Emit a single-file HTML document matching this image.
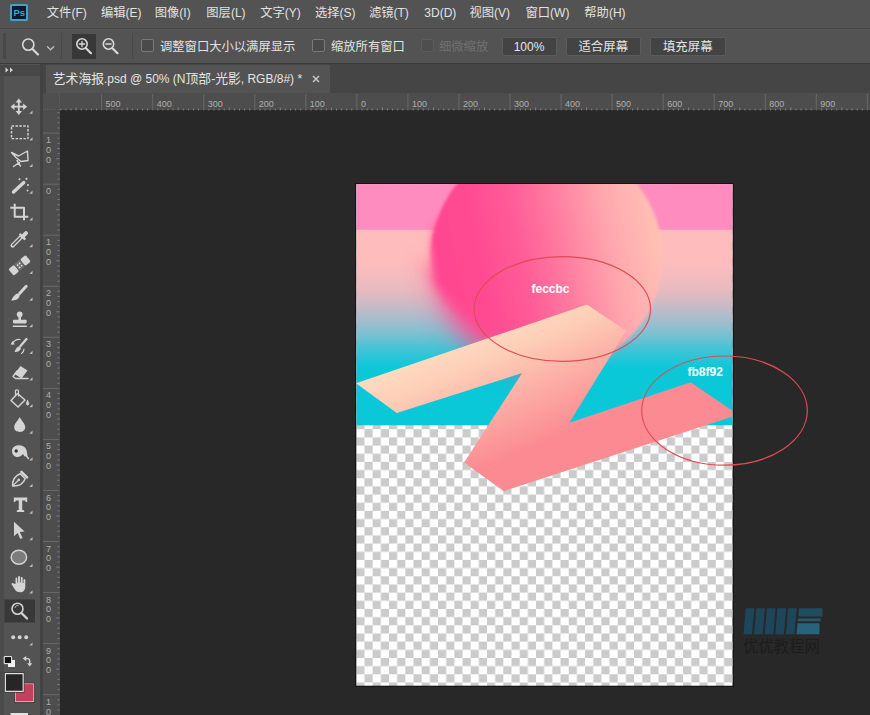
<!DOCTYPE html>
<html><head><meta charset="utf-8"><title>Photoshop</title><style>
*{box-sizing:border-box}
html,body{margin:0;padding:0}
body{width:870px;height:715px;overflow:hidden;background:#282828;position:relative;
 font-family:"Liberation Sans","Noto Sans CJK SC",sans-serif;font-size:12px;color:#dcdcdc}
.abs{position:absolute}
.t{position:absolute;white-space:nowrap;line-height:16px;height:16px}
#menubar{left:0;top:0;width:870px;height:29px;background:#535353;border-bottom:1.5px solid #464646}
#optbar{left:0;top:29px;width:870px;height:35px;background:#535353;border-top:1px solid #585858;border-bottom:1.5px solid #3a3a3a}
#tabstrip{left:39px;top:64px;width:831px;height:30px;background:#454545}
#tab{left:45.5px;top:64.5px;width:284px;height:29px;background:#535353}
#toolbar{left:0;top:64px;width:40px;height:651px;background:#535353}
#toolhead{left:0;top:64.5px;width:39.5px;height:11px;background:#474747}
#toolsep{left:39.5px;top:64px;width:3.5px;height:651px;background:#424242}
#hruler{left:42.5px;top:92.7px;width:828px;height:17.8px;background:#4d4d4d}
#vruler{left:42.5px;top:93px;width:17px;height:622px;background:#4d4d4d}
.btn{position:absolute;top:37px;height:19px;background:#434343;border:1px solid #5c5c5c;border-radius:2px;
 text-align:center;line-height:19px;color:#e6e6e6;white-space:nowrap}
.cb{position:absolute;top:39px;width:13px;height:13px;border:1px solid #7a7a7a;background:#4a4a4a;border-radius:2px}
.rl{position:absolute;font-size:9px;line-height:9px;color:#adadad;white-space:nowrap}
</style></head>
<body>
<div id="menubar" class="abs"></div>
<div class="abs" style="left:9.7px;top:3.6px;width:18px;height:17.6px;background:#0a1c2c;border:2px solid #3fa2c6;border-radius:1.5px"></div>
<div class="abs" style="left:13.6px;top:6.6px;font-size:9.5px;line-height:12px;font-weight:bold;color:#2eaad4;letter-spacing:-0.3px">Ps</div>
<div class="t" style="left:46.8px;top:5px;color:#e2e2e2"><span style="font-size:12.3px">文件</span>(F)</div>
<div class="t" style="left:101px;top:5px;color:#e2e2e2"><span style="font-size:12.3px">编辑</span>(E)</div>
<div class="t" style="left:154.7px;top:5px;color:#e2e2e2"><span style="font-size:12.3px">图像</span>(I)</div>
<div class="t" style="left:206.3px;top:5px;color:#e2e2e2"><span style="font-size:12.3px">图层</span>(L)</div>
<div class="t" style="left:260.2px;top:5px;color:#e2e2e2"><span style="font-size:12.3px">文字</span>(Y)</div>
<div class="t" style="left:315px;top:5px;color:#e2e2e2"><span style="font-size:12.3px">选择</span>(S)</div>
<div class="t" style="left:368.9px;top:5px;color:#e2e2e2"><span style="font-size:12.3px">滤镜</span>(T)</div>
<div class="t" style="left:424.3px;top:5px;color:#e2e2e2">3D(D)</div>
<div class="t" style="left:469.5px;top:5px;color:#e2e2e2"><span style="font-size:12.3px">视图</span>(V)</div>
<div class="t" style="left:525.5px;top:5px;color:#e2e2e2"><span style="font-size:12.3px">窗口</span>(W)</div>
<div class="t" style="left:584.3px;top:5px;color:#e2e2e2"><span style="font-size:12.3px">帮助</span>(H)</div>
<div id="optbar" class="abs"></div>
<div class="abs" style="left:2.5px;top:33px;width:3px;height:26px;background:#494949"></div>
<div class="abs" style="left:60.5px;top:33px;width:1px;height:26px;background:#484848"></div>
<div class="abs" style="left:131.5px;top:33px;width:1px;height:26px;background:#484848"></div>
<div class="abs" style="left:72px;top:33.5px;width:23.5px;height:25.5px;background:#383838"></div>
<svg class="abs" style="left:0;top:28px" width="140" height="36" viewBox="0 28 140 36" fill="none" stroke="#d8d8d8" stroke-width="1.6" stroke-linecap="round">
<circle cx="28.3" cy="44.6" r="5.6"/><path d="M32.5 49 L38 54.5" stroke-width="2.2"/>
<path d="M47.5 46.8 L50.6 49.8 L53.7 46.8" stroke-width="1.3" stroke="#bdbdbd"/>
<circle cx="82" cy="44" r="5.2"/><path d="M86 48.2 L91 53.2" stroke-width="2.2"/><path d="M79.3 44 H84.7 M82 41.3 V46.7" stroke-width="1.3"/>
<circle cx="108.5" cy="44" r="5.2"/><path d="M112.5 48.2 L117.5 53.2" stroke-width="2.2"/><path d="M105.8 44 H111.2" stroke-width="1.3"/>
</svg>
<div class="cb" style="left:141px"></div>
<div class="t" style="left:160px;top:38.5px;color:#e2e2e2"><span style="font-size:12.3px">调整窗口大小以满屏显示</span></div>
<div class="cb" style="left:311.5px"></div>
<div class="t" style="left:331px;top:38.5px;color:#e2e2e2"><span style="font-size:12.3px">缩放所有窗口</span></div>
<div class="cb" style="left:421px;border-color:#5c5c5c;background:#4e4e4e"></div>
<div class="t" style="left:439px;top:38.5px;color:#707070"><span style="font-size:12.3px">细微缩放</span></div>
<div class="btn" style="left:501.5px;width:55px">100%</div>
<div class="btn" style="left:565.5px;width:75.5px"><span style="font-size:12.4px">适合屏幕</span></div>
<div class="btn" style="left:649.5px;width:76.5px"><span style="font-size:12.4px">填充屏幕</span></div>
<div id="tabstrip" class="abs"></div>
<div id="tab" class="abs"></div>
<div class="t" style="left:52.8px;top:70px;font-size:12px;line-height:17px;height:17px;color:#e4e4e4"><span style="font-size:12.8px">艺术海报</span>.psd @ 50% (N<span style="font-size:12.8px">顶部</span>-<span style="font-size:12.8px">光影</span>, RGB/8#) *</div>
<svg class="abs" style="left:310.5px;top:73.5px" width="10" height="10" viewBox="0 0 10 10"><path d="M2 2 L8 8 M8 2 L2 8" stroke="#c8c8c8" stroke-width="1.5"/></svg>
<div id="hruler" class="abs"></div>
<div id="vruler" class="abs"></div>
<svg class="abs" style="left:0;top:0" width="870" height="715" viewBox="0 0 870 715" fill="none"><path d="M60.8 108.5 V110.5" stroke="#7c7c7c" stroke-width="1"/><path d="M65.9 108.5 V110.5" stroke="#7c7c7c" stroke-width="1"/><path d="M71.0 108.5 V110.5" stroke="#7c7c7c" stroke-width="1"/><path d="M76.1 107.3 V110.5" stroke="#7c7c7c" stroke-width="1"/><path d="M81.2 108.5 V110.5" stroke="#7c7c7c" stroke-width="1"/><path d="M86.3 108.5 V110.5" stroke="#7c7c7c" stroke-width="1"/><path d="M91.4 108.5 V110.5" stroke="#7c7c7c" stroke-width="1"/><path d="M96.5 108.5 V110.5" stroke="#7c7c7c" stroke-width="1"/><path d="M101.6 94 V110.5" stroke="#686868" stroke-width="1"/><path d="M106.8 108.5 V110.5" stroke="#7c7c7c" stroke-width="1"/><path d="M111.9 108.5 V110.5" stroke="#7c7c7c" stroke-width="1"/><path d="M117.0 108.5 V110.5" stroke="#7c7c7c" stroke-width="1"/><path d="M122.1 108.5 V110.5" stroke="#7c7c7c" stroke-width="1"/><path d="M127.2 107.3 V110.5" stroke="#7c7c7c" stroke-width="1"/><path d="M132.3 108.5 V110.5" stroke="#7c7c7c" stroke-width="1"/><path d="M137.4 108.5 V110.5" stroke="#7c7c7c" stroke-width="1"/><path d="M142.5 108.5 V110.5" stroke="#7c7c7c" stroke-width="1"/><path d="M147.6 108.5 V110.5" stroke="#7c7c7c" stroke-width="1"/><path d="M152.7 94 V110.5" stroke="#686868" stroke-width="1"/><path d="M157.8 108.5 V110.5" stroke="#7c7c7c" stroke-width="1"/><path d="M162.9 108.5 V110.5" stroke="#7c7c7c" stroke-width="1"/><path d="M168.0 108.5 V110.5" stroke="#7c7c7c" stroke-width="1"/><path d="M173.1 108.5 V110.5" stroke="#7c7c7c" stroke-width="1"/><path d="M178.2 107.3 V110.5" stroke="#7c7c7c" stroke-width="1"/><path d="M183.3 108.5 V110.5" stroke="#7c7c7c" stroke-width="1"/><path d="M188.4 108.5 V110.5" stroke="#7c7c7c" stroke-width="1"/><path d="M193.5 108.5 V110.5" stroke="#7c7c7c" stroke-width="1"/><path d="M198.6 108.5 V110.5" stroke="#7c7c7c" stroke-width="1"/><path d="M203.8 94 V110.5" stroke="#686868" stroke-width="1"/><path d="M208.9 108.5 V110.5" stroke="#7c7c7c" stroke-width="1"/><path d="M214.0 108.5 V110.5" stroke="#7c7c7c" stroke-width="1"/><path d="M219.1 108.5 V110.5" stroke="#7c7c7c" stroke-width="1"/><path d="M224.2 108.5 V110.5" stroke="#7c7c7c" stroke-width="1"/><path d="M229.3 107.3 V110.5" stroke="#7c7c7c" stroke-width="1"/><path d="M234.4 108.5 V110.5" stroke="#7c7c7c" stroke-width="1"/><path d="M239.5 108.5 V110.5" stroke="#7c7c7c" stroke-width="1"/><path d="M244.6 108.5 V110.5" stroke="#7c7c7c" stroke-width="1"/><path d="M249.7 108.5 V110.5" stroke="#7c7c7c" stroke-width="1"/><path d="M254.8 94 V110.5" stroke="#686868" stroke-width="1"/><path d="M259.9 108.5 V110.5" stroke="#7c7c7c" stroke-width="1"/><path d="M265.0 108.5 V110.5" stroke="#7c7c7c" stroke-width="1"/><path d="M270.1 108.5 V110.5" stroke="#7c7c7c" stroke-width="1"/><path d="M275.2 108.5 V110.5" stroke="#7c7c7c" stroke-width="1"/><path d="M280.3 107.3 V110.5" stroke="#7c7c7c" stroke-width="1"/><path d="M285.4 108.5 V110.5" stroke="#7c7c7c" stroke-width="1"/><path d="M290.5 108.5 V110.5" stroke="#7c7c7c" stroke-width="1"/><path d="M295.6 108.5 V110.5" stroke="#7c7c7c" stroke-width="1"/><path d="M300.7 108.5 V110.5" stroke="#7c7c7c" stroke-width="1"/><path d="M305.8 94 V110.5" stroke="#686868" stroke-width="1"/><path d="M311.0 108.5 V110.5" stroke="#7c7c7c" stroke-width="1"/><path d="M316.1 108.5 V110.5" stroke="#7c7c7c" stroke-width="1"/><path d="M321.2 108.5 V110.5" stroke="#7c7c7c" stroke-width="1"/><path d="M326.3 108.5 V110.5" stroke="#7c7c7c" stroke-width="1"/><path d="M331.4 107.3 V110.5" stroke="#7c7c7c" stroke-width="1"/><path d="M336.5 108.5 V110.5" stroke="#7c7c7c" stroke-width="1"/><path d="M341.6 108.5 V110.5" stroke="#7c7c7c" stroke-width="1"/><path d="M346.7 108.5 V110.5" stroke="#7c7c7c" stroke-width="1"/><path d="M351.8 108.5 V110.5" stroke="#7c7c7c" stroke-width="1"/><path d="M356.9 94 V110.5" stroke="#686868" stroke-width="1"/><path d="M362.0 108.5 V110.5" stroke="#7c7c7c" stroke-width="1"/><path d="M367.1 108.5 V110.5" stroke="#7c7c7c" stroke-width="1"/><path d="M372.2 108.5 V110.5" stroke="#7c7c7c" stroke-width="1"/><path d="M377.3 108.5 V110.5" stroke="#7c7c7c" stroke-width="1"/><path d="M382.4 107.3 V110.5" stroke="#7c7c7c" stroke-width="1"/><path d="M387.5 108.5 V110.5" stroke="#7c7c7c" stroke-width="1"/><path d="M392.6 108.5 V110.5" stroke="#7c7c7c" stroke-width="1"/><path d="M397.7 108.5 V110.5" stroke="#7c7c7c" stroke-width="1"/><path d="M402.8 108.5 V110.5" stroke="#7c7c7c" stroke-width="1"/><path d="M407.9 94 V110.5" stroke="#686868" stroke-width="1"/><path d="M413.1 108.5 V110.5" stroke="#7c7c7c" stroke-width="1"/><path d="M418.2 108.5 V110.5" stroke="#7c7c7c" stroke-width="1"/><path d="M423.3 108.5 V110.5" stroke="#7c7c7c" stroke-width="1"/><path d="M428.4 108.5 V110.5" stroke="#7c7c7c" stroke-width="1"/><path d="M433.5 107.3 V110.5" stroke="#7c7c7c" stroke-width="1"/><path d="M438.6 108.5 V110.5" stroke="#7c7c7c" stroke-width="1"/><path d="M443.7 108.5 V110.5" stroke="#7c7c7c" stroke-width="1"/><path d="M448.8 108.5 V110.5" stroke="#7c7c7c" stroke-width="1"/><path d="M453.9 108.5 V110.5" stroke="#7c7c7c" stroke-width="1"/><path d="M459.0 94 V110.5" stroke="#686868" stroke-width="1"/><path d="M464.1 108.5 V110.5" stroke="#7c7c7c" stroke-width="1"/><path d="M469.2 108.5 V110.5" stroke="#7c7c7c" stroke-width="1"/><path d="M474.3 108.5 V110.5" stroke="#7c7c7c" stroke-width="1"/><path d="M479.4 108.5 V110.5" stroke="#7c7c7c" stroke-width="1"/><path d="M484.5 107.3 V110.5" stroke="#7c7c7c" stroke-width="1"/><path d="M489.6 108.5 V110.5" stroke="#7c7c7c" stroke-width="1"/><path d="M494.7 108.5 V110.5" stroke="#7c7c7c" stroke-width="1"/><path d="M499.8 108.5 V110.5" stroke="#7c7c7c" stroke-width="1"/><path d="M504.9 108.5 V110.5" stroke="#7c7c7c" stroke-width="1"/><path d="M510.0 94 V110.5" stroke="#686868" stroke-width="1"/><path d="M515.2 108.5 V110.5" stroke="#7c7c7c" stroke-width="1"/><path d="M520.3 108.5 V110.5" stroke="#7c7c7c" stroke-width="1"/><path d="M525.4 108.5 V110.5" stroke="#7c7c7c" stroke-width="1"/><path d="M530.5 108.5 V110.5" stroke="#7c7c7c" stroke-width="1"/><path d="M535.6 107.3 V110.5" stroke="#7c7c7c" stroke-width="1"/><path d="M540.7 108.5 V110.5" stroke="#7c7c7c" stroke-width="1"/><path d="M545.8 108.5 V110.5" stroke="#7c7c7c" stroke-width="1"/><path d="M550.9 108.5 V110.5" stroke="#7c7c7c" stroke-width="1"/><path d="M556.0 108.5 V110.5" stroke="#7c7c7c" stroke-width="1"/><path d="M561.1 94 V110.5" stroke="#686868" stroke-width="1"/><path d="M566.2 108.5 V110.5" stroke="#7c7c7c" stroke-width="1"/><path d="M571.3 108.5 V110.5" stroke="#7c7c7c" stroke-width="1"/><path d="M576.4 108.5 V110.5" stroke="#7c7c7c" stroke-width="1"/><path d="M581.5 108.5 V110.5" stroke="#7c7c7c" stroke-width="1"/><path d="M586.6 107.3 V110.5" stroke="#7c7c7c" stroke-width="1"/><path d="M591.7 108.5 V110.5" stroke="#7c7c7c" stroke-width="1"/><path d="M596.8 108.5 V110.5" stroke="#7c7c7c" stroke-width="1"/><path d="M601.9 108.5 V110.5" stroke="#7c7c7c" stroke-width="1"/><path d="M607.0 108.5 V110.5" stroke="#7c7c7c" stroke-width="1"/><path d="M612.1 94 V110.5" stroke="#686868" stroke-width="1"/><path d="M617.3 108.5 V110.5" stroke="#7c7c7c" stroke-width="1"/><path d="M622.4 108.5 V110.5" stroke="#7c7c7c" stroke-width="1"/><path d="M627.5 108.5 V110.5" stroke="#7c7c7c" stroke-width="1"/><path d="M632.6 108.5 V110.5" stroke="#7c7c7c" stroke-width="1"/><path d="M637.7 107.3 V110.5" stroke="#7c7c7c" stroke-width="1"/><path d="M642.8 108.5 V110.5" stroke="#7c7c7c" stroke-width="1"/><path d="M647.9 108.5 V110.5" stroke="#7c7c7c" stroke-width="1"/><path d="M653.0 108.5 V110.5" stroke="#7c7c7c" stroke-width="1"/><path d="M658.1 108.5 V110.5" stroke="#7c7c7c" stroke-width="1"/><path d="M663.2 94 V110.5" stroke="#686868" stroke-width="1"/><path d="M668.3 108.5 V110.5" stroke="#7c7c7c" stroke-width="1"/><path d="M673.4 108.5 V110.5" stroke="#7c7c7c" stroke-width="1"/><path d="M678.5 108.5 V110.5" stroke="#7c7c7c" stroke-width="1"/><path d="M683.6 108.5 V110.5" stroke="#7c7c7c" stroke-width="1"/><path d="M688.7 107.3 V110.5" stroke="#7c7c7c" stroke-width="1"/><path d="M693.8 108.5 V110.5" stroke="#7c7c7c" stroke-width="1"/><path d="M698.9 108.5 V110.5" stroke="#7c7c7c" stroke-width="1"/><path d="M704.0 108.5 V110.5" stroke="#7c7c7c" stroke-width="1"/><path d="M709.1 108.5 V110.5" stroke="#7c7c7c" stroke-width="1"/><path d="M714.2 94 V110.5" stroke="#686868" stroke-width="1"/><path d="M719.4 108.5 V110.5" stroke="#7c7c7c" stroke-width="1"/><path d="M724.5 108.5 V110.5" stroke="#7c7c7c" stroke-width="1"/><path d="M729.6 108.5 V110.5" stroke="#7c7c7c" stroke-width="1"/><path d="M734.7 108.5 V110.5" stroke="#7c7c7c" stroke-width="1"/><path d="M739.8 107.3 V110.5" stroke="#7c7c7c" stroke-width="1"/><path d="M744.9 108.5 V110.5" stroke="#7c7c7c" stroke-width="1"/><path d="M750.0 108.5 V110.5" stroke="#7c7c7c" stroke-width="1"/><path d="M755.1 108.5 V110.5" stroke="#7c7c7c" stroke-width="1"/><path d="M760.2 108.5 V110.5" stroke="#7c7c7c" stroke-width="1"/><path d="M765.3 94 V110.5" stroke="#686868" stroke-width="1"/><path d="M770.4 108.5 V110.5" stroke="#7c7c7c" stroke-width="1"/><path d="M775.5 108.5 V110.5" stroke="#7c7c7c" stroke-width="1"/><path d="M780.6 108.5 V110.5" stroke="#7c7c7c" stroke-width="1"/><path d="M785.7 108.5 V110.5" stroke="#7c7c7c" stroke-width="1"/><path d="M790.8 107.3 V110.5" stroke="#7c7c7c" stroke-width="1"/><path d="M795.9 108.5 V110.5" stroke="#7c7c7c" stroke-width="1"/><path d="M801.0 108.5 V110.5" stroke="#7c7c7c" stroke-width="1"/><path d="M806.1 108.5 V110.5" stroke="#7c7c7c" stroke-width="1"/><path d="M811.2 108.5 V110.5" stroke="#7c7c7c" stroke-width="1"/><path d="M816.3 94 V110.5" stroke="#686868" stroke-width="1"/><path d="M821.5 108.5 V110.5" stroke="#7c7c7c" stroke-width="1"/><path d="M826.6 108.5 V110.5" stroke="#7c7c7c" stroke-width="1"/><path d="M831.7 108.5 V110.5" stroke="#7c7c7c" stroke-width="1"/><path d="M836.8 108.5 V110.5" stroke="#7c7c7c" stroke-width="1"/><path d="M841.9 107.3 V110.5" stroke="#7c7c7c" stroke-width="1"/><path d="M847.0 108.5 V110.5" stroke="#7c7c7c" stroke-width="1"/><path d="M852.1 108.5 V110.5" stroke="#7c7c7c" stroke-width="1"/><path d="M857.2 108.5 V110.5" stroke="#7c7c7c" stroke-width="1"/><path d="M862.3 108.5 V110.5" stroke="#7c7c7c" stroke-width="1"/><path d="M867.4 94 V110.5" stroke="#686868" stroke-width="1"/><path d="M57.5 112.7 H59.5" stroke="#7c7c7c" stroke-width="1"/><path d="M57.5 117.8 H59.5" stroke="#7c7c7c" stroke-width="1"/><path d="M57.5 122.9 H59.5" stroke="#7c7c7c" stroke-width="1"/><path d="M57.5 128.0 H59.5" stroke="#7c7c7c" stroke-width="1"/><path d="M43 133.1 H59.5" stroke="#686868" stroke-width="1"/><path d="M57.5 138.3 H59.5" stroke="#7c7c7c" stroke-width="1"/><path d="M57.5 143.4 H59.5" stroke="#7c7c7c" stroke-width="1"/><path d="M57.5 148.5 H59.5" stroke="#7c7c7c" stroke-width="1"/><path d="M57.5 153.6 H59.5" stroke="#7c7c7c" stroke-width="1"/><path d="M56.3 158.7 H59.5" stroke="#7c7c7c" stroke-width="1"/><path d="M57.5 163.8 H59.5" stroke="#7c7c7c" stroke-width="1"/><path d="M57.5 168.9 H59.5" stroke="#7c7c7c" stroke-width="1"/><path d="M57.5 174.0 H59.5" stroke="#7c7c7c" stroke-width="1"/><path d="M57.5 179.1 H59.5" stroke="#7c7c7c" stroke-width="1"/><path d="M43 184.2 H59.5" stroke="#686868" stroke-width="1"/><path d="M57.5 189.3 H59.5" stroke="#7c7c7c" stroke-width="1"/><path d="M57.5 194.4 H59.5" stroke="#7c7c7c" stroke-width="1"/><path d="M57.5 199.5 H59.5" stroke="#7c7c7c" stroke-width="1"/><path d="M57.5 204.6 H59.5" stroke="#7c7c7c" stroke-width="1"/><path d="M56.3 209.7 H59.5" stroke="#7c7c7c" stroke-width="1"/><path d="M57.5 214.8 H59.5" stroke="#7c7c7c" stroke-width="1"/><path d="M57.5 219.9 H59.5" stroke="#7c7c7c" stroke-width="1"/><path d="M57.5 225.0 H59.5" stroke="#7c7c7c" stroke-width="1"/><path d="M57.5 230.1 H59.5" stroke="#7c7c7c" stroke-width="1"/><path d="M43 235.2 H59.5" stroke="#686868" stroke-width="1"/><path d="M57.5 240.4 H59.5" stroke="#7c7c7c" stroke-width="1"/><path d="M57.5 245.5 H59.5" stroke="#7c7c7c" stroke-width="1"/><path d="M57.5 250.6 H59.5" stroke="#7c7c7c" stroke-width="1"/><path d="M57.5 255.7 H59.5" stroke="#7c7c7c" stroke-width="1"/><path d="M56.3 260.8 H59.5" stroke="#7c7c7c" stroke-width="1"/><path d="M57.5 265.9 H59.5" stroke="#7c7c7c" stroke-width="1"/><path d="M57.5 271.0 H59.5" stroke="#7c7c7c" stroke-width="1"/><path d="M57.5 276.1 H59.5" stroke="#7c7c7c" stroke-width="1"/><path d="M57.5 281.2 H59.5" stroke="#7c7c7c" stroke-width="1"/><path d="M43 286.3 H59.5" stroke="#686868" stroke-width="1"/><path d="M57.5 291.4 H59.5" stroke="#7c7c7c" stroke-width="1"/><path d="M57.5 296.5 H59.5" stroke="#7c7c7c" stroke-width="1"/><path d="M57.5 301.6 H59.5" stroke="#7c7c7c" stroke-width="1"/><path d="M57.5 306.7 H59.5" stroke="#7c7c7c" stroke-width="1"/><path d="M56.3 311.8 H59.5" stroke="#7c7c7c" stroke-width="1"/><path d="M57.5 316.9 H59.5" stroke="#7c7c7c" stroke-width="1"/><path d="M57.5 322.0 H59.5" stroke="#7c7c7c" stroke-width="1"/><path d="M57.5 327.1 H59.5" stroke="#7c7c7c" stroke-width="1"/><path d="M57.5 332.2 H59.5" stroke="#7c7c7c" stroke-width="1"/><path d="M43 337.3 H59.5" stroke="#686868" stroke-width="1"/><path d="M57.5 342.5 H59.5" stroke="#7c7c7c" stroke-width="1"/><path d="M57.5 347.6 H59.5" stroke="#7c7c7c" stroke-width="1"/><path d="M57.5 352.7 H59.5" stroke="#7c7c7c" stroke-width="1"/><path d="M57.5 357.8 H59.5" stroke="#7c7c7c" stroke-width="1"/><path d="M56.3 362.9 H59.5" stroke="#7c7c7c" stroke-width="1"/><path d="M57.5 368.0 H59.5" stroke="#7c7c7c" stroke-width="1"/><path d="M57.5 373.1 H59.5" stroke="#7c7c7c" stroke-width="1"/><path d="M57.5 378.2 H59.5" stroke="#7c7c7c" stroke-width="1"/><path d="M57.5 383.3 H59.5" stroke="#7c7c7c" stroke-width="1"/><path d="M43 388.4 H59.5" stroke="#686868" stroke-width="1"/><path d="M57.5 393.5 H59.5" stroke="#7c7c7c" stroke-width="1"/><path d="M57.5 398.6 H59.5" stroke="#7c7c7c" stroke-width="1"/><path d="M57.5 403.7 H59.5" stroke="#7c7c7c" stroke-width="1"/><path d="M57.5 408.8 H59.5" stroke="#7c7c7c" stroke-width="1"/><path d="M56.3 413.9 H59.5" stroke="#7c7c7c" stroke-width="1"/><path d="M57.5 419.0 H59.5" stroke="#7c7c7c" stroke-width="1"/><path d="M57.5 424.1 H59.5" stroke="#7c7c7c" stroke-width="1"/><path d="M57.5 429.2 H59.5" stroke="#7c7c7c" stroke-width="1"/><path d="M57.5 434.3 H59.5" stroke="#7c7c7c" stroke-width="1"/><path d="M43 439.4 H59.5" stroke="#686868" stroke-width="1"/><path d="M57.5 444.6 H59.5" stroke="#7c7c7c" stroke-width="1"/><path d="M57.5 449.7 H59.5" stroke="#7c7c7c" stroke-width="1"/><path d="M57.5 454.8 H59.5" stroke="#7c7c7c" stroke-width="1"/><path d="M57.5 459.9 H59.5" stroke="#7c7c7c" stroke-width="1"/><path d="M56.3 465.0 H59.5" stroke="#7c7c7c" stroke-width="1"/><path d="M57.5 470.1 H59.5" stroke="#7c7c7c" stroke-width="1"/><path d="M57.5 475.2 H59.5" stroke="#7c7c7c" stroke-width="1"/><path d="M57.5 480.3 H59.5" stroke="#7c7c7c" stroke-width="1"/><path d="M57.5 485.4 H59.5" stroke="#7c7c7c" stroke-width="1"/><path d="M43 490.5 H59.5" stroke="#686868" stroke-width="1"/><path d="M57.5 495.6 H59.5" stroke="#7c7c7c" stroke-width="1"/><path d="M57.5 500.7 H59.5" stroke="#7c7c7c" stroke-width="1"/><path d="M57.5 505.8 H59.5" stroke="#7c7c7c" stroke-width="1"/><path d="M57.5 510.9 H59.5" stroke="#7c7c7c" stroke-width="1"/><path d="M56.3 516.0 H59.5" stroke="#7c7c7c" stroke-width="1"/><path d="M57.5 521.1 H59.5" stroke="#7c7c7c" stroke-width="1"/><path d="M57.5 526.2 H59.5" stroke="#7c7c7c" stroke-width="1"/><path d="M57.5 531.3 H59.5" stroke="#7c7c7c" stroke-width="1"/><path d="M57.5 536.4 H59.5" stroke="#7c7c7c" stroke-width="1"/><path d="M43 541.5 H59.5" stroke="#686868" stroke-width="1"/><path d="M57.5 546.7 H59.5" stroke="#7c7c7c" stroke-width="1"/><path d="M57.5 551.8 H59.5" stroke="#7c7c7c" stroke-width="1"/><path d="M57.5 556.9 H59.5" stroke="#7c7c7c" stroke-width="1"/><path d="M57.5 562.0 H59.5" stroke="#7c7c7c" stroke-width="1"/><path d="M56.3 567.1 H59.5" stroke="#7c7c7c" stroke-width="1"/><path d="M57.5 572.2 H59.5" stroke="#7c7c7c" stroke-width="1"/><path d="M57.5 577.3 H59.5" stroke="#7c7c7c" stroke-width="1"/><path d="M57.5 582.4 H59.5" stroke="#7c7c7c" stroke-width="1"/><path d="M57.5 587.5 H59.5" stroke="#7c7c7c" stroke-width="1"/><path d="M43 592.6 H59.5" stroke="#686868" stroke-width="1"/><path d="M57.5 597.7 H59.5" stroke="#7c7c7c" stroke-width="1"/><path d="M57.5 602.8 H59.5" stroke="#7c7c7c" stroke-width="1"/><path d="M57.5 607.9 H59.5" stroke="#7c7c7c" stroke-width="1"/><path d="M57.5 613.0 H59.5" stroke="#7c7c7c" stroke-width="1"/><path d="M56.3 618.1 H59.5" stroke="#7c7c7c" stroke-width="1"/><path d="M57.5 623.2 H59.5" stroke="#7c7c7c" stroke-width="1"/><path d="M57.5 628.3 H59.5" stroke="#7c7c7c" stroke-width="1"/><path d="M57.5 633.4 H59.5" stroke="#7c7c7c" stroke-width="1"/><path d="M57.5 638.5 H59.5" stroke="#7c7c7c" stroke-width="1"/><path d="M43 643.6 H59.5" stroke="#686868" stroke-width="1"/><path d="M57.5 648.8 H59.5" stroke="#7c7c7c" stroke-width="1"/><path d="M57.5 653.9 H59.5" stroke="#7c7c7c" stroke-width="1"/><path d="M57.5 659.0 H59.5" stroke="#7c7c7c" stroke-width="1"/><path d="M57.5 664.1 H59.5" stroke="#7c7c7c" stroke-width="1"/><path d="M56.3 669.2 H59.5" stroke="#7c7c7c" stroke-width="1"/><path d="M57.5 674.3 H59.5" stroke="#7c7c7c" stroke-width="1"/><path d="M57.5 679.4 H59.5" stroke="#7c7c7c" stroke-width="1"/><path d="M57.5 684.5 H59.5" stroke="#7c7c7c" stroke-width="1"/><path d="M57.5 689.6 H59.5" stroke="#7c7c7c" stroke-width="1"/><path d="M43 694.7 H59.5" stroke="#686868" stroke-width="1"/><path d="M57.5 699.8 H59.5" stroke="#7c7c7c" stroke-width="1"/><path d="M57.5 704.9 H59.5" stroke="#7c7c7c" stroke-width="1"/><path d="M57.5 710.0 H59.5" stroke="#7c7c7c" stroke-width="1"/></svg>
<div class="rl" style="left:105.6px;top:99.5px">500</div>
<div class="rl" style="left:156.7px;top:99.5px">400</div>
<div class="rl" style="left:207.8px;top:99.5px">300</div>
<div class="rl" style="left:258.8px;top:99.5px">200</div>
<div class="rl" style="left:309.8px;top:99.5px">100</div>
<div class="rl" style="left:360.9px;top:99.5px">0</div>
<div class="rl" style="left:411.9px;top:99.5px">100</div>
<div class="rl" style="left:463.0px;top:99.5px">200</div>
<div class="rl" style="left:514.0px;top:99.5px">300</div>
<div class="rl" style="left:565.1px;top:99.5px">400</div>
<div class="rl" style="left:616.1px;top:99.5px">500</div>
<div class="rl" style="left:667.2px;top:99.5px">600</div>
<div class="rl" style="left:718.2px;top:99.5px">700</div>
<div class="rl" style="left:769.3px;top:99.5px">800</div>
<div class="rl" style="left:820.3px;top:99.5px">900</div>
<div class="rl" style="left:871.4px;top:99.5px">1000</div>
<div class="rl" style="left:46px;top:136.1px">1</div>
<div class="rl" style="left:46px;top:145.9px">0</div>
<div class="rl" style="left:46px;top:155.7px">0</div>
<div class="rl" style="left:46px;top:187.2px">0</div>
<div class="rl" style="left:46px;top:238.2px">1</div>
<div class="rl" style="left:46px;top:248.1px">0</div>
<div class="rl" style="left:46px;top:257.9px">0</div>
<div class="rl" style="left:46px;top:289.3px">2</div>
<div class="rl" style="left:46px;top:299.1px">0</div>
<div class="rl" style="left:46px;top:308.9px">0</div>
<div class="rl" style="left:46px;top:340.3px">3</div>
<div class="rl" style="left:46px;top:350.1px">0</div>
<div class="rl" style="left:46px;top:359.9px">0</div>
<div class="rl" style="left:46px;top:391.4px">4</div>
<div class="rl" style="left:46px;top:401.2px">0</div>
<div class="rl" style="left:46px;top:411.0px">0</div>
<div class="rl" style="left:46px;top:442.4px">5</div>
<div class="rl" style="left:46px;top:452.2px">0</div>
<div class="rl" style="left:46px;top:462.1px">0</div>
<div class="rl" style="left:46px;top:493.5px">6</div>
<div class="rl" style="left:46px;top:503.3px">0</div>
<div class="rl" style="left:46px;top:513.1px">0</div>
<div class="rl" style="left:46px;top:544.5px">7</div>
<div class="rl" style="left:46px;top:554.3px">0</div>
<div class="rl" style="left:46px;top:564.1px">0</div>
<div class="rl" style="left:46px;top:595.6px">8</div>
<div class="rl" style="left:46px;top:605.4px">0</div>
<div class="rl" style="left:46px;top:615.2px">0</div>
<div class="rl" style="left:46px;top:646.6px">9</div>
<div class="rl" style="left:46px;top:656.4px">0</div>
<div class="rl" style="left:46px;top:666.2px">0</div>
<div class="rl" style="left:46px;top:697.7px">1</div>
<div class="rl" style="left:46px;top:707.5px">0</div>
<div class="rl" style="left:46px;top:717.3px">0</div>
<div class="rl" style="left:46px;top:727.1px">0</div>
<div class="abs" style="left:42.5px;top:92.7px;width:17px;height:17.8px;background:#4f4f4f;border-right:1px dotted #5e5e5e;border-bottom:1px dotted #5e5e5e"></div>
<svg class="abs" style="left:0;top:0" width="870" height="715" viewBox="0 0 870 715">
<defs>
<pattern id="chk" x="356.3" y="184.1" width="16.34" height="16.34" patternUnits="userSpaceOnUse">
<rect width="16.34" height="16.34" fill="#ffffff"/><rect x="8.17" width="8.17" height="8.17" fill="#cbcbcb"/><rect y="8.17" width="8.17" height="8.17" fill="#cbcbcb"/></pattern>
<clipPath id="dc"><rect x="356.3" y="184.1" width="376.3" height="501.6"/></clipPath>
<linearGradient id="bg" x1="0" y1="230" x2="0" y2="425.5" gradientUnits="userSpaceOnUse">
<stop offset="0" stop-color="#ffbcbc"/><stop offset="0.164" stop-color="#ffbcbc"/><stop offset="0.307" stop-color="#e8bac0"/><stop offset="0.409" stop-color="#c0bac8"/><stop offset="0.512" stop-color="#88c0d0"/><stop offset="0.614" stop-color="#40c4d6"/><stop offset="0.706" stop-color="#0ac8d8"/><stop offset="1" stop-color="#0ac8d8"/></linearGradient>
<linearGradient id="sp" x1="433" y1="280" x2="658" y2="236" gradientUnits="userSpaceOnUse">
<stop offset="0" stop-color="#ff4590"/><stop offset="0.2" stop-color="#ff4991"/><stop offset="0.4" stop-color="#ff5c97"/><stop offset="0.58" stop-color="#ff7ca0"/><stop offset="0.8" stop-color="#ffa8ae"/><stop offset="1" stop-color="#ffc0b4"/></linearGradient>
<linearGradient id="ng" x1="560" y1="300" x2="609.1" y2="414.9" gradientUnits="userSpaceOnUse">
<stop offset="0" stop-color="#fedac0"/><stop offset="0.22" stop-color="#fdceb6"/><stop offset="0.55" stop-color="#fcb0a6"/><stop offset="1" stop-color="#fb8a92"/></linearGradient>
<filter id="b1" x="-20%" y="-20%" width="140%" height="140%"><feGaussianBlur stdDeviation="1.8"/></filter>
<filter id="b2" x="-30%" y="-30%" width="160%" height="160%"><feGaussianBlur stdDeviation="13"/></filter>
<linearGradient id="mgB" x1="546.8" y1="256.8" x2="474.8" y2="352.8" gradientUnits="userSpaceOnUse"><stop offset="0.433" stop-color="#fff"/><stop offset="0.667" stop-color="#000"/></linearGradient>
<linearGradient id="mgM" x1="546.8" y1="256.8" x2="474.8" y2="352.8" gradientUnits="userSpaceOnUse"><stop offset="0.233" stop-color="#000"/><stop offset="0.417" stop-color="#fff"/><stop offset="0.70" stop-color="#fff"/><stop offset="0.85" stop-color="#000"/></linearGradient>
<linearGradient id="mgA" x1="546.8" y1="256.8" x2="474.8" y2="352.8" gradientUnits="userSpaceOnUse"><stop offset="0.583" stop-color="#000"/><stop offset="0.733" stop-color="#fff"/></linearGradient>
<mask id="mkB" maskUnits="userSpaceOnUse" x="300" y="100" width="500" height="400"><rect x="300" y="100" width="500" height="400" fill="url(#mgB)"/></mask>
<mask id="mkM" maskUnits="userSpaceOnUse" x="300" y="100" width="500" height="400"><rect x="300" y="100" width="500" height="400" fill="url(#mgM)"/></mask>
<mask id="mkA" maskUnits="userSpaceOnUse" x="300" y="100" width="500" height="400"><rect x="300" y="100" width="500" height="400" fill="url(#mgA)"/></mask>
<filter id="b3" x="-20%" y="-20%" width="140%" height="140%"><feGaussianBlur stdDeviation="4.5"/></filter>
</defs>
<rect x="355.1" y="183.1" width="378.7" height="503.8" fill="#131313"/>
<rect x="356.3" y="184.1" width="376.3" height="501.6" fill="url(#chk)"/>
<g clip-path="url(#dc)">
<rect x="356.3" y="184.1" width="376.3" height="45.900000000000006" fill="#ff8cbf"/>
<rect x="356.3" y="229.8" width="376.3" height="195.5" fill="url(#bg)"/>
<g mask="url(#mkA)"><circle cx="546.8" cy="256.8" r="114.5" fill="url(#sp)" filter="url(#b2)"/></g>
<g mask="url(#mkM)"><circle cx="546.8" cy="256.8" r="115.5" fill="url(#sp)" filter="url(#b3)"/></g>
<g mask="url(#mkB)"><circle cx="546.8" cy="256.8" r="115.8" fill="url(#sp)" filter="url(#b1)"/></g>
<polygon points="356,383.2 587,304.5 626,330.8 569.3,422.8 690.8,382.2 732.7,411 732.7,416.5 503.8,491.2 464,462.6 522.2,373 396.8,413" fill="url(#ng)"/>
</g>
<ellipse cx="562.3" cy="309" rx="88.3" ry="52.4" fill="none" stroke="#e04c52" stroke-width="1.2"/>
<ellipse cx="724.5" cy="410.6" rx="82.8" ry="54.6" fill="none" stroke="#e04c52" stroke-width="1.2"/>
</svg>
<div class="t" style="left:531.5px;top:281px;font-size:12px;font-weight:bold;color:#fff">feccbc</div>
<div class="t" style="left:687.5px;top:364px;font-size:12px;font-weight:bold;color:#fff">fb8f92</div>
<svg class="abs" style="left:738px;top:604px" width="92" height="54" viewBox="738 604 92 54"><path d="M745.7 608.3 H754.3 L752.1 634.3 H743.5Z" fill="#1e465a"/><path d="M756.3 608.3 H764.9 L762.7 634.3 H754.1Z" fill="#1e465a"/><path d="M766.9 608.3 H775.5 L773.3 634.3 H764.7Z" fill="#1e465a"/><path d="M777.5 608.3 H786.1 L783.9 634.3 H775.3Z" fill="#1e465a"/><path d="M788.1 608.3 H796.7 L794.5 634.3 H785.9Z" fill="#1e465a"/><path d="M799 608.3 H822.5 V616.5 H798.3Z" fill="#204c62"/><path d="M798 618.5 H820.5 V621.3 H797.8Z" fill="#275a70"/><path d="M797.5 623.3 H819.5 V634.3 H796.5Z" fill="#26647c"/></svg>
<div class="t" style="left:743px;top:637.5px;color:#1c1c1c;line-height:18px;height:18px"><span style="font-size:15.4px">优优教程网</span></div>
<div id="toolbar" class="abs"></div>
<div id="toolhead" class="abs"></div>
<div class="abs" style="left:0;top:75.5px;width:3.5px;height:640px;background:#4b4b4b"></div>
<div id="toolsep" class="abs"></div>
<svg class="abs" style="left:0;top:64px" width="42" height="651" viewBox="0 64 42 651" fill="none" stroke="#d4d4d4" stroke-linecap="round" stroke-linejoin="round"><path d="M5.5 67.6 L8.5 70 L5.5 72.4Z M10 67.6 L13 70 L10 72.4Z" fill="#d4d4d4" stroke="none"/><path d="M32.5 110.6 V113.8 H29.3Z" fill="#bcbcbc" stroke="none"/><path d="M32.5 137.3 V140.5 H29.3Z" fill="#bcbcbc" stroke="none"/><path d="M32.5 163.8 V167 H29.3Z" fill="#bcbcbc" stroke="none"/><path d="M32.5 190.60000000000002 V193.8 H29.3Z" fill="#bcbcbc" stroke="none"/><path d="M32.5 217.3 V220.5 H29.3Z" fill="#bcbcbc" stroke="none"/><path d="M32.5 244.10000000000002 V247.3 H29.3Z" fill="#bcbcbc" stroke="none"/><path d="M32.5 270.8 V274 H29.3Z" fill="#bcbcbc" stroke="none"/><path d="M32.5 297.6 V300.8 H29.3Z" fill="#bcbcbc" stroke="none"/><path d="M32.5 324.1 V327.3 H29.3Z" fill="#bcbcbc" stroke="none"/><path d="M32.5 350.8 V354 H29.3Z" fill="#bcbcbc" stroke="none"/><path d="M32.5 377.3 V380.5 H29.3Z" fill="#bcbcbc" stroke="none"/><path d="M32.5 404.1 V407.3 H29.3Z" fill="#bcbcbc" stroke="none"/><path d="M32.5 430.6 V433.8 H29.3Z" fill="#bcbcbc" stroke="none"/><path d="M32.5 457.3 V460.5 H29.3Z" fill="#bcbcbc" stroke="none"/><path d="M32.5 483.8 V487 H29.3Z" fill="#bcbcbc" stroke="none"/><path d="M32.5 510.59999999999997 V513.8 H29.3Z" fill="#bcbcbc" stroke="none"/><path d="M32.5 537.0999999999999 V540.3 H29.3Z" fill="#bcbcbc" stroke="none"/><path d="M32.5 563.8 V567 H29.3Z" fill="#bcbcbc" stroke="none"/><path d="M32.5 590.3 V593.5 H29.3Z" fill="#bcbcbc" stroke="none"/><path d="M32.5 642.4 V645.6 H29.3Z" fill="#bcbcbc" stroke="none"/><path d="M12.8 106.7 H24.8 M18.8 100.7 V112.7" stroke-width="1.8"/><path d="M18.8 98.4 L22 102.4 H15.6Z M18.8 115 L22 111 H15.6Z M10.5 106.7 L14.5 103.5 V109.9Z M27.1 106.7 L23.1 103.5 V109.9Z" fill="#d4d4d4" stroke="none"/><rect x="11.5" y="126" width="16.5" height="12.6" stroke-width="1.4" stroke-dasharray="2.5 1.4" stroke-linecap="butt"/><path d="M11.5 152.5 L18.5 156 L27.5 151 L28 160.5 L21 161.5 L16 157.5 Z M19.5 162.5 L13.5 166.5 M17 160.5 L20.5 166" stroke-width="1.4"/><path d="M13.5 192 L23.8 182.5" stroke-width="3.4"/><circle cx="19.5" cy="179.3" r="1" fill="#d4d4d4" stroke="none"/><circle cx="26.5" cy="178.8" r="1.1" fill="#d4d4d4" stroke="none"/><circle cx="28" cy="185" r="1" fill="#d4d4d4" stroke="none"/><circle cx="27.5" cy="190.5" r="0.9" fill="#d4d4d4" stroke="none"/><path d="M14.7 203.8 V216.8 H28.3 M10.3 207.8 H24 V220.3" stroke-width="2" stroke-linecap="butt"/><path d="M12.6 245.4 L20.6 237.4" stroke-width="4.2"/><path d="M12.9 245.1 L20.3 237.7" stroke="#535353" stroke-width="1.6"/><path d="M20.3 234.6 L24.6 238.9" stroke-width="2.4"/><path d="M22.6 236.6 L26 233.2" stroke-width="4"/><g transform="rotate(-40 19.6 265.4)"><rect x="8.4" y="261.2" width="7.2" height="8.4" rx="1.6" fill="#d4d4d4" stroke="none"/><rect x="23.6" y="261.2" width="7.2" height="8.4" rx="1.6" fill="#d4d4d4" stroke="none"/><rect x="16.2" y="261.2" width="6.8" height="8.4" fill="#707070" stroke="none"/><circle cx="18.3" cy="263.9" r="0.85" fill="#e8e8e8" stroke="none"/><circle cx="20.9" cy="263.9" r="0.85" fill="#e8e8e8" stroke="none"/><circle cx="18.3" cy="266.9" r="0.85" fill="#e8e8e8" stroke="none"/><circle cx="20.9" cy="266.9" r="0.85" fill="#e8e8e8" stroke="none"/></g><path d="M26.2 286.2 L19.6 293.4" stroke-width="2.9"/><path d="M18.2 293.6 C15.6 293.4 13.4 296.2 11.2 300.4 C15.6 301 19 299.2 19.9 295.6Z" fill="#d4d4d4" stroke="none"/><circle cx="19.7" cy="314.3" r="2.9" fill="#d4d4d4" stroke="none"/><path d="M19.7 316 V320" stroke-width="2.6"/><rect x="13" y="319.8" width="13.6" height="3.6" rx="0.8" fill="#d4d4d4" stroke="none"/><path d="M13.3 326.3 H26.3" stroke-width="1.5"/><path d="M26.5 339 L20.5 346" stroke-width="2.3"/><path d="M19.5 346.3 C17.5 346.3 16 348.5 14.5 352 C18 352.3 20.3 350.8 21 348Z" fill="#d4d4d4" stroke="none"/><path d="M12.5 344 C13.5 340.5 17 339 20 339.5" stroke-width="1.2"/><path d="M10.5 344.5 L14.8 344.5 L12.6 341Z" fill="#d4d4d4" stroke="none"/><path d="M24 349 C24 351 23 352.5 21.5 353.5" stroke-width="1.1"/><path d="M20.5 366 L27.5 370.5 L21.5 378.5 L14.5 374Z" fill="#d4d4d4" stroke="none"/><path d="M17 371 L13 376.5 L15.5 378.5 H28" stroke-width="1.4"/><path d="M17.5 393.5 L25 400 L18 407 L11 400.5Z" stroke-width="1.5"/><path d="M15.5 395 V390.5 C15.5 389.5 18.5 389.5 18.5 391 V396" stroke-width="1.2"/><path d="M27.5 400.5 C29 403 29.3 404.5 27.6 405.3 C25.8 404.5 26.2 403 27.5 400.5Z" fill="#d4d4d4" stroke="#d4d4d4" stroke-width="0.8"/><path d="M19.7 417.3 C22 421 25.2 424 25.2 427.3 C25.2 430.2 22.8 432 19.7 432 C16.6 432 14.2 430.2 14.2 427.3 C14.2 424 17.4 421 19.7 417.3Z" fill="#d4d4d4" stroke="none"/><path d="M12 451 C12 447.5 15 445.2 18.5 445.2 C22.5 445.2 25.5 447 26.5 450 L27.5 455.5 L24.5 456.5 L23 454 C21.5 456 19.5 457 17.5 457 C14.5 457 12 454.5 12 451Z" fill="#d4d4d4" stroke="none"/><circle cx="16.2" cy="451" r="1.7" fill="#333" stroke="none"/><path d="M26 455.5 L28.5 458.5" stroke-width="1.5"/><path d="M12.6 486 C12.4 480.6 14.8 476 20.2 473.8 L25.2 478.8 C23 484.2 18.2 486.4 12.6 486Z" fill="#535353" stroke-width="1.5"/><path d="M21.4 471.8 L27 477.4" stroke-width="2.6"/><path d="M13 485.6 L17.6 481" stroke-width="1.2"/><circle cx="18.7" cy="479.9" r="1.3" fill="#d4d4d4" stroke="none"/><path d="M13.8 497.6 H27.2 V502 H25.8 L25.2 500.4 H22.2 V509.8 L24.2 510.4 V512 H16.8 V510.4 L18.8 509.8 V500.4 H15.8 L15.2 502 H13.8Z" fill="#d4d4d4" stroke="none"/><path d="M14 521.8 L24.6 531.5 L19.8 531.9 L22.6 537.9 L20.3 539 L17.6 533 L14 536.3Z" fill="#d4d4d4" stroke="none"/><ellipse cx="18.9" cy="557.2" rx="7.7" ry="7" fill="#7c7c7c" stroke-width="1.5"/><path d="M15.5 584 V578.5 C15.5 577.3 17.3 577.3 17.3 578.5 V582.5 L18.1 582.5 V577 C18.1 575.8 20 575.8 20 577 V582.5 L20.8 582.5 V577.8 C20.8 576.6 22.7 576.6 22.7 577.8 V583 L23.5 583 V580 C23.5 578.8 25.3 578.8 25.3 580 V586.5 C25.3 590 23.3 592.3 20 592.3 C17.3 592.3 16 591.2 14.6 589 L11.7 584.6 C11 583.3 12.5 582.3 13.5 583.4Z" fill="#d4d4d4" stroke="none"/><rect x="4.5" y="599.5" width="30.5" height="23" fill="#383838" stroke="none"/><circle cx="17.5" cy="608.8" r="5.5" stroke-width="1.6"/><path d="M21.7 613.2 L27 618.5" stroke-width="2.3"/><path d="M15 607.5 C15.5 606 17 605.3 18.3 605.6" stroke-width="0.9"/><circle cx="13.2" cy="637.3" r="1.95" fill="#d4d4d4" stroke="none"/><circle cx="19.7" cy="637.3" r="1.95" fill="#d4d4d4" stroke="none"/><circle cx="26.2" cy="637.3" r="1.95" fill="#d4d4d4" stroke="none"/><rect x="8" y="660" width="7" height="7" fill="#f0f0f0" stroke="none"/><rect x="4.6" y="656.6" width="7" height="7" fill="#111" stroke="#f0f0f0" stroke-width="1"/><path d="M25.8 658.6 H27.6 C29 658.6 29.7 659.4 29.7 660.8 V663.6" stroke-width="1.4"/><path d="M22.8 658.6 L26.2 656 V661.2Z M29.7 666.6 L27.1 663.2 H32.3Z" fill="#d4d4d4" stroke="none"/><rect x="15.7" y="683.6" width="18.2" height="18.2" fill="#c4405c" stroke="#f0c8d0" stroke-width="1"/><rect x="15" y="683" width="19.6" height="19.6" stroke="#3a3a3a" stroke-width="0.8"/><rect x="4" y="672.3" width="20.4" height="20.4" fill="#3a3a3a" stroke="none"/><rect x="5.4" y="673.6" width="17.8" height="17.8" fill="#262626" stroke="#dcdcdc" stroke-width="1.2"/><rect x="10.5" y="713" width="17.5" height="2" fill="#e0e0e0" stroke="none"/></svg>
</body></html>
